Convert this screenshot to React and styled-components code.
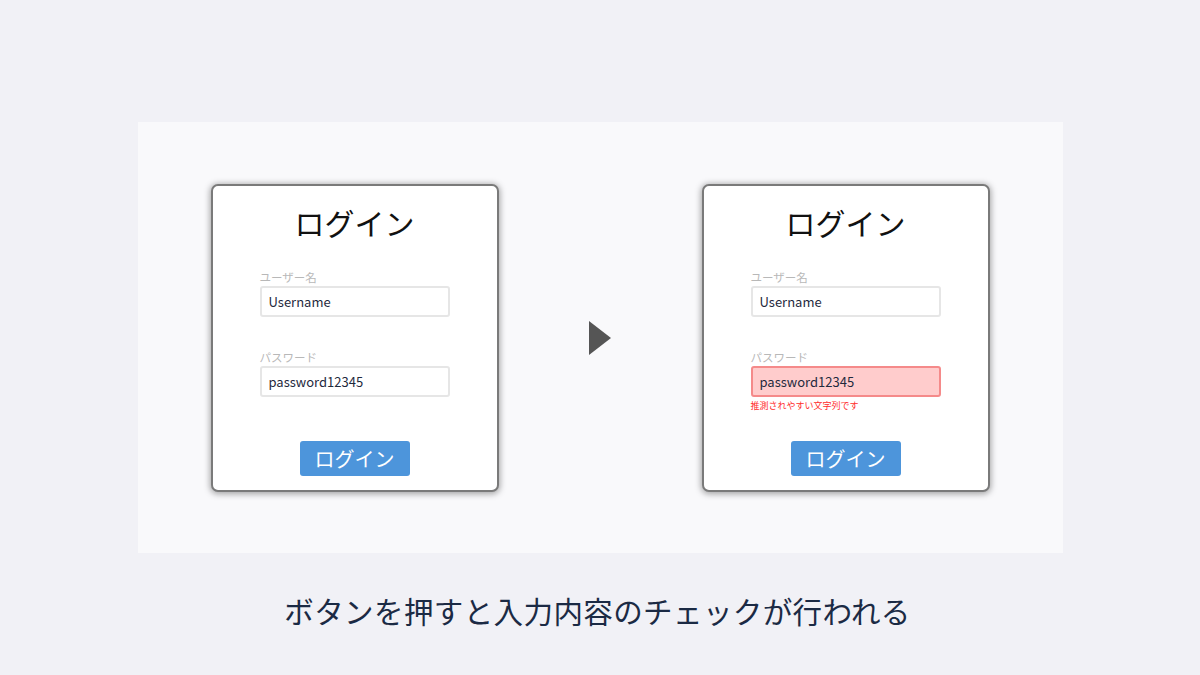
import React from 'react';
import styled, { createGlobalStyle } from 'styled-components';

const GlobalStyle = createGlobalStyle`
  html, body {
    margin: 0;
    padding: 0;
    background: #f1f1f6;
  }
  body {
    font-family: 'Noto Sans CJK JP', 'Noto Sans', sans-serif;
  }
`;

const Page = styled.div`
  width: 1200px;
  height: 675px;
  display: flex;
  flex-direction: column;
  align-items: center;
  padding-top: 122px;
  box-sizing: border-box;
`;

const Panel = styled.div`
  width: 925px;
  height: 431px;
  background: #f9f9fb;
  display: flex;
  align-items: center;
  justify-content: space-between;
  padding: 0 73px 0 73px;
  box-sizing: border-box;
`;

const Card = styled.div`
  width: 288px;
  height: 308px;
  box-sizing: border-box;
  background: #ffffff;
  border: 2px solid #7a7a7a;
  border-radius: 7px;
  box-shadow: 0 1px 6px 1px rgba(0, 0, 0, 0.35);
  display: flex;
  flex-direction: column;
  align-items: center;
  padding-top: 18px;
`;

const Title = styled.h1`
  margin: 0;
  font-size: 30px;
  line-height: 36px;
  font-weight: 400;
  color: #111111;
`;

const Form = styled.div`
  width: 190px;
  display: flex;
  flex-direction: column;
`;

const Field = styled.div`
  display: flex;
  flex-direction: column;
  margin-top: ${({ $first }) => ($first ? '30px' : '33px')};
`;

const Label = styled.label`
  font-size: 11.5px;
  line-height: 14px;
  color: #b8b8b8;
  margin-bottom: 2px;
`;

const Input = styled.div`
  height: 31px;
  box-sizing: border-box;
  border: 2px solid ${({ $error }) => ($error ? '#f58a8a' : '#e6e6e6')};
  background: ${({ $error }) => ($error ? '#ffcccc' : '#ffffff')};
  border-radius: 3px;
  padding: 0 7px;
  display: flex;
  align-items: center;
  font-size: 13px;
  color: #1f2a3d;
`;

const Message = styled.div`
  height: 14px;
  margin-top: 2px;
  font-size: 9px;
  line-height: 14px;
  color: #ff2b2b;
`;

const Button = styled.button`
  margin-top: 28px;
  width: 110px;
  height: 35px;
  border: 0;
  border-radius: 3px;
  background: #4d95db;
  color: #ffffff;
  font-family: 'Noto Sans CJK JP', sans-serif;
  font-size: 20px;
  line-height: 35px;
  padding: 0;
`;

const Arrow = styled.div`
  width: 0;
  height: 0;
  border-top: 17px solid transparent;
  border-bottom: 17px solid transparent;
  border-left: 22px solid #555555;
`;

const Caption = styled.p`
  margin: 31px 0 0;
  padding-right: 5px;
  font-size: 29.5px;
  line-height: 52px;
  color: #1b2a44;
  letter-spacing: 0.4px;
`;

const LoginCard = ({ error }) => (
  <Card>
    <Title>ログイン</Title>
    <Form>
      <Field $first>
        <Label>ユーザー名</Label>
        <Input>Username</Input>
      </Field>
      <Field>
        <Label>パスワード</Label>
        <Input $error={!!error}>password12345</Input>
        <Message>{error}</Message>
      </Field>
    </Form>
    <Button>ログイン</Button>
  </Card>
);

export default function App() {
  return (
    <>
      <GlobalStyle />
      <Page>
        <Panel>
          <LoginCard />
          <Arrow />
          <LoginCard error="推測されやすい文字列です" />
        </Panel>
        <Caption>ボタンを押すと入力内容のチェックが行われる</Caption>
      </Page>
    </>
  );
}
